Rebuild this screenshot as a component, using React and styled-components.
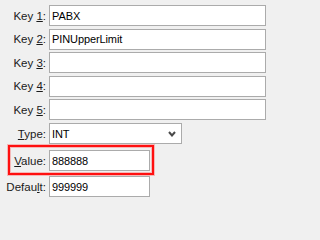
import React from "react";
import styled, { createGlobalStyle } from "styled-components";

const Global = createGlobalStyle`
  html, body { margin: 0; padding: 0; background: #f0f0f0; }
  body { font-family: "Liberation Sans", Arial, sans-serif; font-size: 11px; color: #000; }
`;

const Form = styled.div`
  display: flex;
  flex-direction: column;
  padding-top: 5px;
  width: 271px;
  height: 202px;
  box-sizing: border-box;
`;

const Row = styled.div`
  position: relative;
  display: flex;
  align-items: center;
  height: 21px;
  margin-top: ${(p) => p.$gap || 0}px;
`;

const Label = styled.label`
  width: 46px;
  flex: none;
  text-align: right;
  white-space: nowrap;
  margin-right: 3px;
  font-size: 11.5px;
  color: #1a1a1a;
`;

const Key = styled.u`
  text-decoration: underline;
  text-underline-offset: 1px;
`;

const Field = styled.div`
  box-sizing: border-box;
  width: ${(p) => p.$w}px;
  height: 21px;
  background: #fff;
  border: 1px solid #ababab;
  display: flex;
  align-items: center;
  padding-left: 2px;
  letter-spacing: -0.1px;
  position: relative;
`;

const Chevron = styled.svg`
  position: absolute;
  right: 5px;
  top: 7px;
`;

const Highlight = styled.div`
  position: absolute;
  left: 8px;
  top: -5px;
  width: 146px;
  height: 30px;
  box-sizing: border-box;
  border: 2px solid #ff1010;
  box-shadow: 0 0 0 1px rgba(255, 80, 80, 0.35), inset 0 0 0 1px rgba(255, 80, 80, 0.35);
  pointer-events: none;
`;

const keys = [
  { n: "1", v: "PABX", gap: 0 },
  { n: "2", v: "PINUpperLimit", gap: 2.5 },
  { n: "3", v: "", gap: 2.5 },
  { n: "4", v: "", gap: 2.5 },
  { n: "5", v: "", gap: 2.5 },
];

export default function App() {
  return (
    <>
      <Global />
      <Form>
        {keys.map((k) => (
          <Row key={k.n} $gap={k.gap}>
            <Label>
              Key <Key>{k.n}</Key>:
            </Label>
            <Field $w={217}>{k.v}</Field>
          </Row>
        ))}
        <Row $gap={3}>
          <Label>
            <Key>T</Key>ype:
          </Label>
          <Field $w={133}>
            INT
            <Chevron width="8" height="6" viewBox="0 0 8 6">
              <path d="M1 1 L4 4.5 L7 1" fill="none" stroke="#4a4a4a" strokeWidth="2" />
            </Chevron>
          </Field>
        </Row>
        <Row $gap={6}>
          <Highlight />
          <Label>
            <Key>V</Key>alue:
          </Label>
          <Field $w={101}>888888</Field>
        </Row>
        <Row $gap={5}>
          <Label>
            Defau<Key>l</Key>t:
          </Label>
          <Field $w={101}>999999</Field>
        </Row>
      </Form>
    </>
  );
}
